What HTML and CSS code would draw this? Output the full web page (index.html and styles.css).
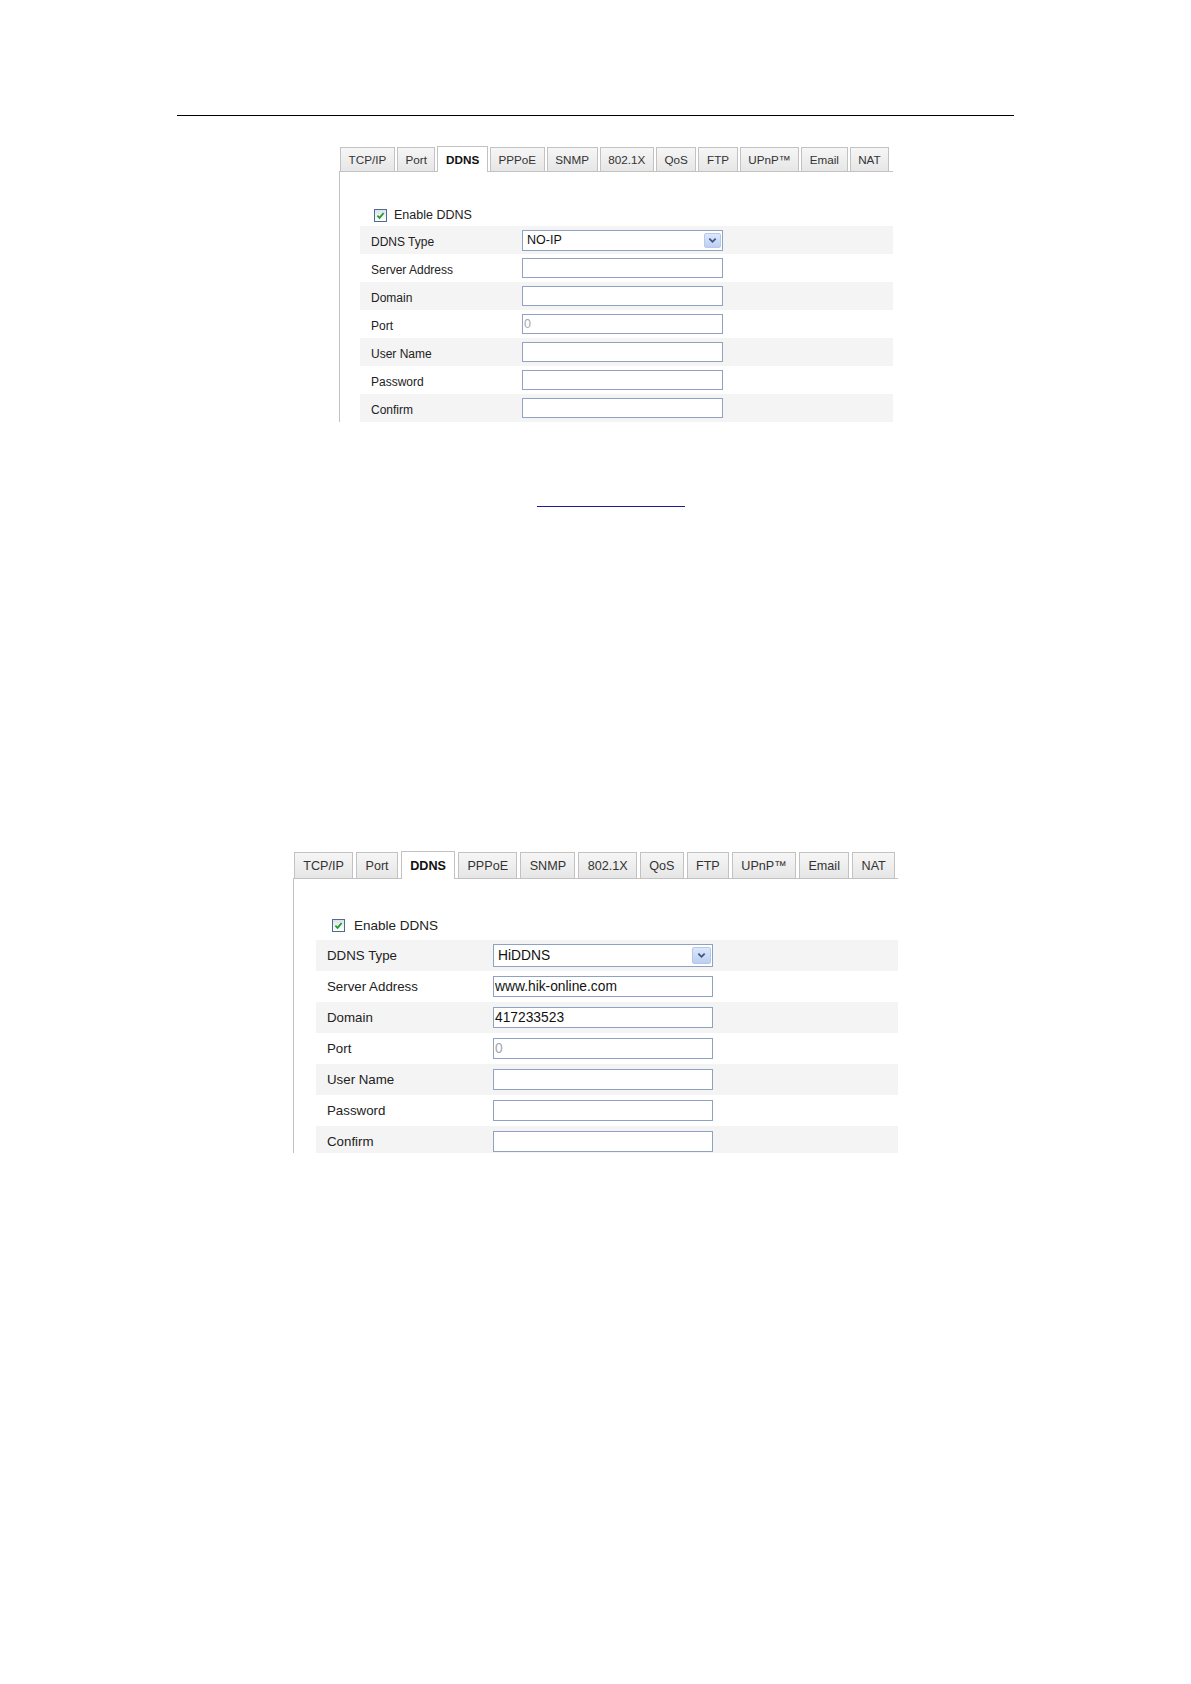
FILE: index.html
```html
<!DOCTYPE html>
<html lang="en">
<head>
<meta charset="utf-8">
<title>DDNS Settings</title>
<link rel="stylesheet" href="styles.css">
</head>
<body>
<div class="page">
  <div class="rule"></div>

  <section class="panel panel-a">
    <div class="tabs">
      <div class="tab">TCP/IP</div>
      <div class="tab">Port</div>
      <div class="tab active">DDNS</div>
      <div class="tab">PPPoE</div>
      <div class="tab">SNMP</div>
      <div class="tab">802.1X</div>
      <div class="tab">QoS</div>
      <div class="tab">FTP</div>
      <div class="tab">UPnP™</div>
      <div class="tab">Email</div>
      <div class="tab">NAT</div>
    </div>
    <div class="panel-body">
      <div class="check-row">
        <span class="checkbox"><svg viewBox="0 0 12 12"><path d="M2.6 6.2 L5 8.6 L9.4 3.2" fill="none" stroke="#1f9d2a" stroke-width="1.9"/></svg></span>
        <span class="check-label">Enable DDNS</span>
      </div>
      <div class="rows">
        <div class="row shaded">
          <span class="label">DDNS Type</span>
          <div class="select"><span class="select-text">NO-IP</span><span class="select-btn"><svg viewBox="0 0 10 7"><path d="M1.5 1.5 L5 5 L8.5 1.5" fill="none" stroke="#3d5686" stroke-width="2"/></svg></span></div>
        </div>
        <div class="row"><span class="label">Server Address</span><div class="input"></div></div>
        <div class="row shaded"><span class="label">Domain</span><div class="input"></div></div>
        <div class="row"><span class="label">Port</span><div class="input disabled">0</div></div>
        <div class="row shaded"><span class="label">User Name</span><div class="input"></div></div>
        <div class="row"><span class="label">Password</span><div class="input"></div></div>
        <div class="row shaded"><span class="label">Confirm</span><div class="input"></div></div>
      </div>
    </div>
  </section>

  <div class="link-line"></div>

  <section class="panel panel-b">
    <div class="tabs">
      <div class="tab">TCP/IP</div>
      <div class="tab">Port</div>
      <div class="tab active">DDNS</div>
      <div class="tab">PPPoE</div>
      <div class="tab">SNMP</div>
      <div class="tab">802.1X</div>
      <div class="tab">QoS</div>
      <div class="tab">FTP</div>
      <div class="tab">UPnP™</div>
      <div class="tab">Email</div>
      <div class="tab">NAT</div>
    </div>
    <div class="panel-body">
      <div class="check-row">
        <span class="checkbox"><svg viewBox="0 0 12 12"><path d="M2.6 6.2 L5 8.6 L9.4 3.2" fill="none" stroke="#1f9d2a" stroke-width="1.9"/></svg></span>
        <span class="check-label">Enable DDNS</span>
      </div>
      <div class="rows">
        <div class="row shaded">
          <span class="label">DDNS Type</span>
          <div class="select"><span class="select-text">HiDDNS</span><span class="select-btn"><svg viewBox="0 0 10 7"><path d="M1.5 1.5 L5 5 L8.5 1.5" fill="none" stroke="#3d5686" stroke-width="2"/></svg></span></div>
        </div>
        <div class="row"><span class="label">Server Address</span><div class="input">www.hik-online.com</div></div>
        <div class="row shaded"><span class="label">Domain</span><div class="input">417233523</div></div>
        <div class="row"><span class="label">Port</span><div class="input disabled">0</div></div>
        <div class="row shaded"><span class="label">User Name</span><div class="input"></div></div>
        <div class="row"><span class="label">Password</span><div class="input"></div></div>
        <div class="row shaded"><span class="label">Confirm</span><div class="input"></div></div>
      </div>
    </div>
  </section>
</div>
</body>
</html>
```

FILE: styles.css
```css
html, body {
  margin: 0;
  padding: 0;
  background: #ffffff;
}

body {
  width: 1191px;
  height: 1684px;
  overflow: hidden;
  font-family: "Liberation Sans", Arial, sans-serif;
  color: #222222;
}

.page {
  display: flow-root;
}

.rule {
  margin: 115px 0 0 177px;
  width: 837px;
  height: 1px;
  background: #000000;
}

.link-line {
  margin: 84px 0 0 537px;
  width: 148px;
  height: 1px;
  background: #1b1b9c;
}

/* ---------- panel sizing variables ---------- */
.panel-a {
  --mt: 30px;
  --ml: 339px;
  --tab-h: 24px;
  --tab-fs: 11.7px;
  --tab-pad: 7.6px;
  --tab-gap: 2px;
  --body-w: 554px;
  --body-h: 250px;
  --body-pt: 34px;
  --body-pl: 20px;
  --check-h: 18px;
  --check-ml: 14px;
  --check-gap: 7px;
  --check-fs: 12.5px;
  --rows-mt: 2px;
  --row-h: 28px;
  --label-w: 162px;
  --label-pl: 11px;
  --label-pt: 3px;
  --label-fs: 12px;
  --input-w: 201px;
  --input-h: 20px;
  --select-h: 21px;
  --input-fs: 12.5px;
  --btn-w: 17px;
  --btn-h: 15px;
}

.panel-b {
  --mt: 344px;
  --ml: 293px;
  --tab-h: 26px;
  --tab-fs: 12.6px;
  --tab-pad: 8.3px;
  --tab-gap: 3px;
  --body-w: 605px;
  --body-h: 274px;
  --body-pt: 36px;
  --body-pl: 22px;
  --check-h: 20px;
  --check-ml: 16px;
  --check-gap: 9px;
  --check-fs: 13.5px;
  --rows-mt: 5px;
  --row-h: 31px;
  --label-w: 177px;
  --label-pl: 11px;
  --label-pt: 0px;
  --label-fs: 13.3px;
  --input-w: 220px;
  --input-h: 21px;
  --select-h: 23px;
  --input-fs: 13.8px;
  --btn-w: 19px;
  --btn-h: 17px;
}

.panel {
  margin-top: var(--mt);
  margin-left: var(--ml);
  width: var(--body-w);
}

/* ---------- tabs ---------- */
.tabs {
  display: flex;
  align-items: flex-end;
  gap: var(--tab-gap);
  height: calc(var(--tab-h) + 1px);
  padding-left: 1px;
}

.tab {
  box-sizing: border-box;
  height: var(--tab-h);
  padding: 0 var(--tab-pad);
  border: 1px solid #c2c2c2;
  border-bottom: none;
  background: linear-gradient(#f6f6f6, #e6e6e6);
  font-size: var(--tab-fs);
  color: #333333;
  display: flex;
  align-items: center;
  white-space: nowrap;
}

.tab.active {
  height: calc(var(--tab-h) + 2px);
  margin-bottom: -1px;
  background: #ffffff;
  font-weight: bold;
  color: #111111;
  position: relative;
  z-index: 1;
}

/* ---------- body ---------- */
.panel-body {
  box-sizing: border-box;
  height: calc(var(--body-h) + 1px);
  overflow: hidden;
  border-top: 1px solid #c2c2c2;
  border-left: 1px solid #c2c2c2;
  padding-top: var(--body-pt);
  padding-left: var(--body-pl);
}

.check-row {
  display: flex;
  align-items: center;
  height: var(--check-h);
  margin-left: var(--check-ml);
  gap: var(--check-gap);
  font-size: var(--check-fs);
}

.checkbox {
  box-sizing: border-box;
  width: 13px;
  height: 13px;
  border: 1px solid #4f6b8e;
  background: linear-gradient(#dde2e9, #ffffff);
  display: flex;
}

.checkbox svg {
  width: 11px;
  height: 11px;
}

.rows {
  margin-top: var(--rows-mt);
}

.row {
  display: flex;
  align-items: center;
  height: var(--row-h);
}

.row.shaded {
  background: #f4f4f4;
}

.label {
  box-sizing: border-box;
  width: var(--label-w);
  padding-left: var(--label-pl);
  padding-top: var(--label-pt);
  font-size: var(--label-fs);
  color: #222222;
}

.input {
  box-sizing: border-box;
  width: var(--input-w);
  height: var(--input-h);
  border: 1px solid #8fa2bf;
  background: #ffffff;
  padding: 0 1px;
  font-size: var(--input-fs);
  color: #111111;
  display: flex;
  align-items: center;
  white-space: nowrap;
  overflow: hidden;
}

.input.disabled {
  color: #a8a8a8;
}

.select {
  box-sizing: border-box;
  width: var(--input-w);
  height: var(--select-h);
  border: 1px solid #8ea3c2;
  background: #ffffff;
  display: flex;
  align-items: center;
  font-size: var(--input-fs);
  color: #111111;
}

.select-text {
  flex: 1;
  padding-left: 4px;
}

.select-btn {
  box-sizing: border-box;
  width: var(--btn-w);
  height: var(--btn-h);
  margin-right: 1px;
  border: 1px solid #b7c9ea;
  border-radius: 2px;
  background: linear-gradient(#dde7fa, #bccff2);
  display: flex;
  align-items: center;
  justify-content: center;
}

.select-btn svg {
  width: 9px;
  height: 7px;
}
```
